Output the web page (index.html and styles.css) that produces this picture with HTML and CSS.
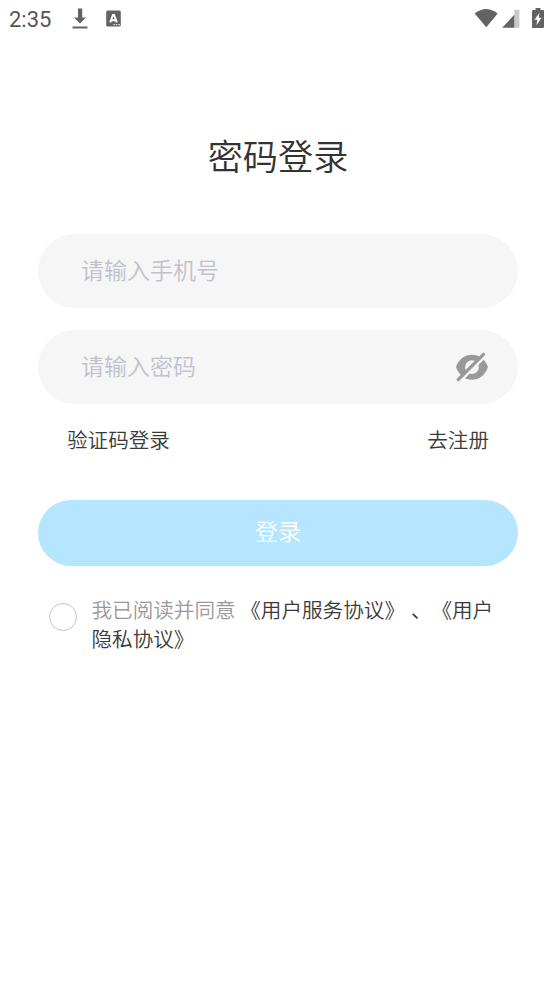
FILE: index.html
```html
<!DOCTYPE html>
<html lang="zh-CN">
<head>
<meta charset="UTF-8">
<title>密码登录</title>
<link rel="stylesheet" href="styles.css">
</head>
<body>
<header class="status">
  <span class="time">2:35</span>
  <svg class="download" width="16" height="22" viewBox="0 0 16 22"><path d="M6 .5h4.200v9H14L8 15.500 2 9.500H6zM.5 18.600h15v1.900H.5z"/></svg>
  <svg class="app" width="16" height="18" viewBox="0 0 16 18"><rect x=".2" y=".5" width="14.600" height="16" rx="1.500"/><path class="letter" d="M4.200 12.300 7 5h1l2.800 7.300M5.300 10.300h4.200"/><path class="dots" d="M7.600 14.700h1.200M10.100 14.700h1.200M12.600 14.700h1.200"/></svg>
  <div class="signals">
    <svg width="24" height="19" viewBox="0 0 24 19"><path d="M.7 4.500Q12-4.500 23.700 4.500L12.300 18.300z"/></svg>
    <svg class="cell" width="18" height="19" viewBox="0 0 18 19"><path class="pale" d="M12.300 .7h5.100v18h-5.100z"/><path d="M12.300 5.800v12.900H.2z"/></svg>
    <svg class="battery" width="12" height="20" viewBox="0 0 12 20"><path d="M3.500 0h5v2H11q1 0 1 1v16q0 1-1 1H1q-1 0-1-1V3q0-1 1-1h2.500z"/><path class="bolt" d="M7.400 4.700 2.500 11.700h2.700L4.500 17.300 9.500 9.700H6.800z"/></svg>
  </div>
</header>
<main>
  <h1>密码登录</h1>
  <div class="field"><span>请输入手机号</span></div>
  <div class="field">
    <span>请输入密码</span>
    <svg class="eye" width="34" height="30" viewBox="0 0 34 30"><path fill-rule="evenodd" d="M1 15C4 6.500 10 2.700 17 2.700s13 3.800 16 12.300C30 23.500 24 27.700 17 27.700S4 23.500 1 15zM17 8.300a6.900 6.900 0 1 0 0 13.800 6.900 6.900 0 0 0 0-13.800z"/><path class="gap" d="M4.500 30 31 3.500"/><path class="slash" d="M3.200 27.600 28.500 2.300"/></svg>
  </div>
  <nav class="links"><a>验证码登录</a><a>去注册</a></nav>
  <button class="submit">登录</button>
  <div class="agreement">
    <span class="radio"></span>
    <p><span class="muted">我已阅读并同意</span> 《用户服务协议》 <span class="sep">、</span>《用户<br>隐私协议》</p>
  </div>
</main>
</body>
</html>
```

FILE: styles.css
```css
* { box-sizing: border-box; }

body {
  margin: 0;
  background: #fff;
  color: #3a3a3a;
  font-family: "Noto Sans CJK SC", sans-serif;
  font-weight: 350;
}

svg { display: block; fill: #636363; }

.status {
  display: flex;
  align-items: flex-start;
  height: 38px;
  padding: 8px 10px 0 9px;
}

.time {
  width: 63px;
  font: 400 22px/24px Roboto, sans-serif;
  color: #555;
}

.app { margin: 2px 0 0 18px; }
.letter { fill: none; stroke: #fff; stroke-width: 2; }
.dots { stroke: #fff; stroke-width: 1.300; }
.signals { display: flex; margin-left: auto; padding-top: 1px; }
.cell { margin-left: 4px; }
.pale { fill: #c8c8c8; }
.battery { margin: -1px 0 0 12px; }
.bolt { fill: #fff; }

main { padding: 91px 36px 0 38px; }

h1 {
  margin: 0 0 53px;
  color: #333;
  font-size: 35.200px;
  font-weight: 350;
  line-height: 52px;
  text-align: center;
}

.field {
  display: flex;
  justify-content: space-between;
  align-items: center;
  height: 74px;
  margin-bottom: 22px;
  padding: 0 29px 0 43px;
  border-radius: 37px;
  background: #f6f6f6;
  color: #c0c2ca;
  font-size: 23px;
}

.field span { padding-bottom: 5px; }

.eye { fill: #999; }
.gap { stroke: #f6f6f6; stroke-width: 2.500; }
.slash { stroke: #999; stroke-width: 3.200; stroke-linecap: round; }

.links {
  display: flex;
  justify-content: space-between;
  margin-top: -2px;
  padding: 0 29px;
  font-size: 20.600px;
  line-height: 30px;
}

.submit {
  display: block;
  width: 100%;
  height: 66px;
  margin: 46px 0 29px;
  padding: 0 0 6px;
  border: 0;
  border-radius: 33px;
  background: #b5e5ff;
  color: #fff;
  font: 350 23px "Noto Sans CJK SC", sans-serif;
}

.agreement { display: flex; padding-left: 10.500px; }

.radio {
  width: 28px;
  height: 28px;
  margin: 8px 15px 0 0;
  border: 1.900px solid #c4c4c4;
  border-radius: 50%;
}

p {
  margin: 0;
  font-size: 20.600px;
  line-height: 29px;
  white-space: nowrap;
}

.muted { color: #999; }
.sep { margin: 0 10px 0 1.500px; }
```
